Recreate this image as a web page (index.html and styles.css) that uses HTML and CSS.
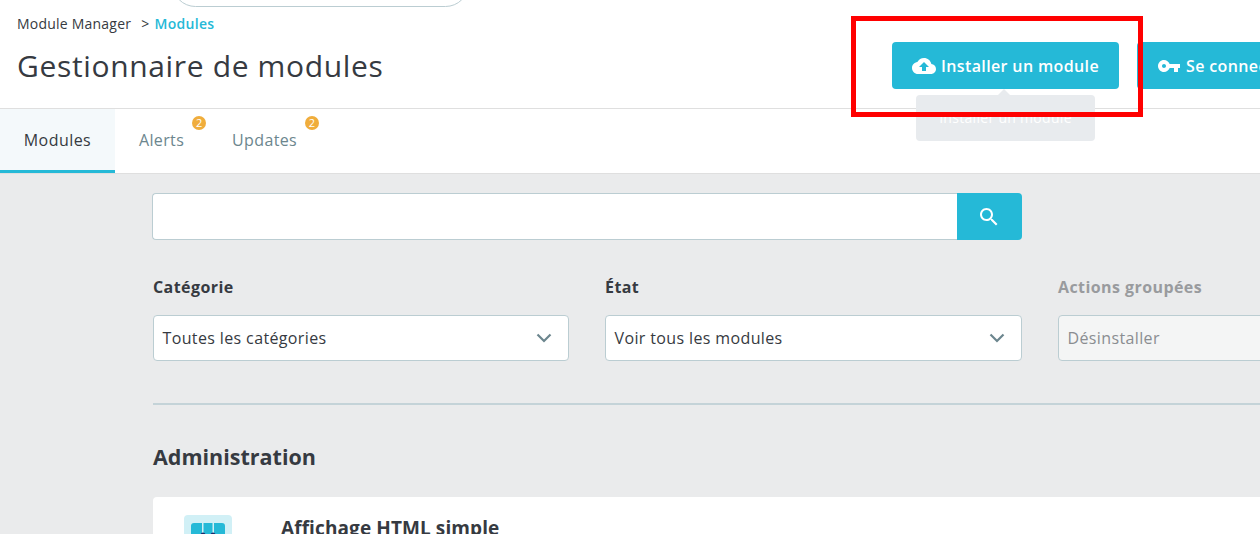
FILE: index.html
```html
<!DOCTYPE html>
<html lang="fr">
<head>
<meta charset="utf-8">
<title>Gestionnaire de modules</title>
<link rel="stylesheet" href="styles.css">
</head>
<body>
<div class="page">
  <div class="top-search"></div>
  <header class="header">
    <div class="heading">
      <nav class="crumbs"><span>Module Manager</span><span class="crumb-sep">&gt;</span><span class="crumb-current">Modules</span></nav>
      <h1 class="title">Gestionnaire de modules</h1>
    </div>
    <div class="toolbar">
      <button class="btn btn-install">
        <svg class="icon-cloud" viewBox="0 0 24 24" aria-hidden="true"><path fill="#fff" d="M19.35 10.04C18.67 6.59 15.64 4 12 4 9.11 4 6.6 5.64 5.35 8.04 2.34 8.36 0 10.91 0 14c0 3.31 2.69 6 6 6h13c2.76 0 5-2.24 5-5 0-2.64-2.05-4.78-4.65-4.96zM14 13v4h-4v-4H7l5-5 5 5h-3z"/></svg>
        <span>Installer un module</span>
      </button>
      <button class="btn btn-login">
        <svg class="icon-key" viewBox="0 0 24 24" aria-hidden="true"><path fill="#fff" d="M12.65 10C11.83 7.67 9.61 6 7 6c-3.31 0-6 2.69-6 6s2.69 6 6 6c2.61 0 4.83-1.67 5.65-4H17v4h4v-4h2v-4H12.65zM7 14c-1.1 0-2-.9-2-2s.9-2 2-2 2 .9 2 2-.9 2-2 2z"/></svg>
        <span>Se connecter à la marketplace</span>
      </button>
    </div>
  </header>
  <nav class="tabs">
    <a class="tab tab-active">Modules</a>
    <a class="tab">Alerts<span class="badge">2</span></a>
    <a class="tab">Updates<span class="badge">2</span></a>
  </nav>
  <main class="content">
    <div class="search">
      <div class="search-input"></div>
      <button class="search-btn">
        <svg class="icon-search" viewBox="0 0 24 24" aria-hidden="true"><path fill="#fff" d="M15.5 14h-.79l-.28-.27C15.41 12.59 16 11.11 16 9.5 16 5.91 13.09 3 9.5 3S3 5.91 3 9.5 5.91 16 9.5 16c1.61 0 3.09-.59 4.23-1.57l.27.28v.79l5 4.99L20.49 19l-4.99-5zm-6 0C7.01 14 5 11.99 5 9.5S7.01 5 9.5 5 14 7.01 14 9.5 11.99 14 9.5 14z"/></svg>
      </button>
    </div>
    <div class="filters">
      <div class="filter">
        <label class="filter-label">Catégorie</label>
        <div class="select"><span>Toutes les catégories</span>
          <svg class="chevron" viewBox="0 0 16 10" aria-hidden="true"><path d="M1.5 1.5 8 8l6.500-6.500" fill="none" stroke="#6c868e" stroke-width="2.200"/></svg>
        </div>
      </div>
      <div class="filter">
        <label class="filter-label">État</label>
        <div class="select"><span>Voir tous les modules</span>
          <svg class="chevron" viewBox="0 0 16 10" aria-hidden="true"><path d="M1.5 1.5 8 8l6.500-6.500" fill="none" stroke="#6c868e" stroke-width="2.200"/></svg>
        </div>
      </div>
      <div class="filter filter-disabled">
        <label class="filter-label">Actions groupées</label>
        <div class="select select-disabled"><span>Désinstaller</span></div>
      </div>
    </div>
    <hr class="divider">
    <h2 class="section-title">Administration</h2>
    <article class="card">
      <div class="card-logo">
        <svg viewBox="0 0 48 48" aria-hidden="true">
          <path fill="#25b9d7" d="M7 48V11a3 3 0 0 1 3-3h8v40zM19.500 48V8h9v40zM30 48V8h8a3 3 0 0 1 3 3v37z"/>
          <circle cx="19" cy="20" r="2.500" fill="#1d2b6b"/>
          <circle cx="29" cy="20" r="2.500" fill="#1d2b6b"/>
        </svg>
      </div>
      <h3 class="card-title">Affichage HTML simple</h3>
    </article>
  </main>
  <div class="tooltip">Installer un module</div>
  <div class="highlight"></div>
</div>
</body>
</html>
```
FILE: styles.css
```css
* { box-sizing: border-box; }
html, body { margin: 0; height: 100%; }
body { font-family: "Open Sans", "Liberation Sans", sans-serif; color: #363a41; background: #fff; overflow: hidden; }
.page { position: relative; width: 1260px; height: 534px; overflow: hidden; display: flex; flex-direction: column; }

.top-search { position: absolute; left: 172px; top: -40px; width: 297px; height: 47px; border: 1px solid #bbcdd2; border-radius: 24px; background: #fff; }

.header { height: 109px; flex: none; display: flex; justify-content: space-between; border-bottom: 1px solid #dfdfdf; padding-left: 17px; background: #fff; }
.crumbs { display: flex; font-size: 14px; line-height: 19px; margin-top: 14px; white-space: nowrap; letter-spacing: 0.22px; }
.crumb-sep { margin: 0 5px 0 10px; }
.crumb-current { color: #25b9d7; font-weight: 600; letter-spacing: 0.3px; }
.title { margin: 14px 0 0; font-size: 30px; line-height: 38px; font-weight: 400; letter-spacing: 0.65px; white-space: nowrap; }

.toolbar { flex: none; width: 368px; display: flex; gap: 18px; padding-top: 42px; align-items: flex-start; overflow: hidden; }
.btn { flex: none; height: 47px; border: 0; border-radius: 4px; background: #25b9d7; color: #fff; font: 600 16px "Open Sans", sans-serif; letter-spacing: 0.37px; display: flex; align-items: center; justify-content: center; gap: 5px; white-space: nowrap; padding: 0; }
.btn-install { width: 227px; }
.btn-login { padding: 0 20px 0 20px; }
.icon-cloud { width: 24px; height: 24px; }
.icon-key { width: 24px; height: 24px; }

.tabs { height: 65px; flex: none; display: flex; background: #fff; border-bottom: 1px solid #dfdfdf; }
.tab { position: relative; height: 64px; padding: 0 24px; font-size: 16px; line-height: 62px; color: #6c868e; letter-spacing: 0.35px; }
.tab-active { width: 115px; color: #363a41; background: #f4f9fb; border-bottom: 3px solid #25b9d7; text-align: center; padding: 0; letter-spacing: 0.45px; }
.badge { position: absolute; right: 2px; top: 7px; width: 14px; height: 14px; border-radius: 50%; background: #f0ad3c; color: #fff; font-size: 11px; line-height: 14px; text-align: center; letter-spacing: 0; }

.content { flex: 1; background: #eaebec; padding: 19px 0 0 153px; }
.search { display: flex; width: 869px; height: 47px; }
.search-input { flex: 1; background: #fff; border: 1px solid #bbcdd2; border-right: 0; border-radius: 4px 0 0 4px; margin-left: -1px; }
.search-btn { width: 65px; border: 0; padding: 0; background: #25b9d7; border-radius: 0 4px 4px 0; display: flex; align-items: center; justify-content: center; }
.icon-search { width: 24px; height: 24px; margin-left: -1px; }

.filters { display: flex; gap: 36px; margin-top: 36px; width: 1200px; }
.filter { width: 417px; flex: none; }
.filter:first-child { width: 416px; }
.filter-label { display: block; font-size: 16px; line-height: 22px; font-weight: 700; margin-bottom: 17px; letter-spacing: 0.42px; }
.filter-disabled .filter-label { color: #999b9e; }
.select { height: 46px; background: #fff; border: 1px solid #bbcdd2; border-radius: 4px; display: flex; align-items: center; justify-content: space-between; padding: 0 16px 0 8.500px; font-size: 16px; color: #363a41; letter-spacing: 0.37px; }
.select-disabled { background: #f4f5f5; color: #8a8d91; }
.chevron { width: 16px; height: 10px; }

.divider { width: 1260px; margin: 42px 0 0; border: 0; border-top: 2px solid #c4d3d8; }
.section-title { margin: 37px 0 0; font-size: 21.500px; line-height: 30px; font-weight: 700; }
.card { display: flex; background: #fff; border-radius: 4px 0 0 0; margin-top: 25px; height: 120px; padding: 18px 0 0 31px; }
.card-logo { width: 48px; height: 48px; border-radius: 4px; background: #d1f0f6; flex: none; }
.card-logo svg { display: block; width: 48px; height: 48px; }
.card-title { margin: 1px 0 0 49px; font-size: 19px; line-height: 24px; font-weight: 700; letter-spacing: 0.1px; }

.tooltip { position: absolute; left: 916px; top: 95px; width: 179px; height: 46px; background: #e8ebee; border-radius: 4px; color: #fff; font-size: 14px; line-height: 46px; text-align: center; letter-spacing: 0.3px; }
.tooltip::before { content: ""; position: absolute; left: 82px; top: -6px; border-left: 6px solid transparent; border-right: 6px solid transparent; border-bottom: 6px solid #e8ebee; }
.highlight { position: absolute; left: 851px; top: 16px; width: 292px; height: 101px; border: 5px solid #ff0000; }
```
